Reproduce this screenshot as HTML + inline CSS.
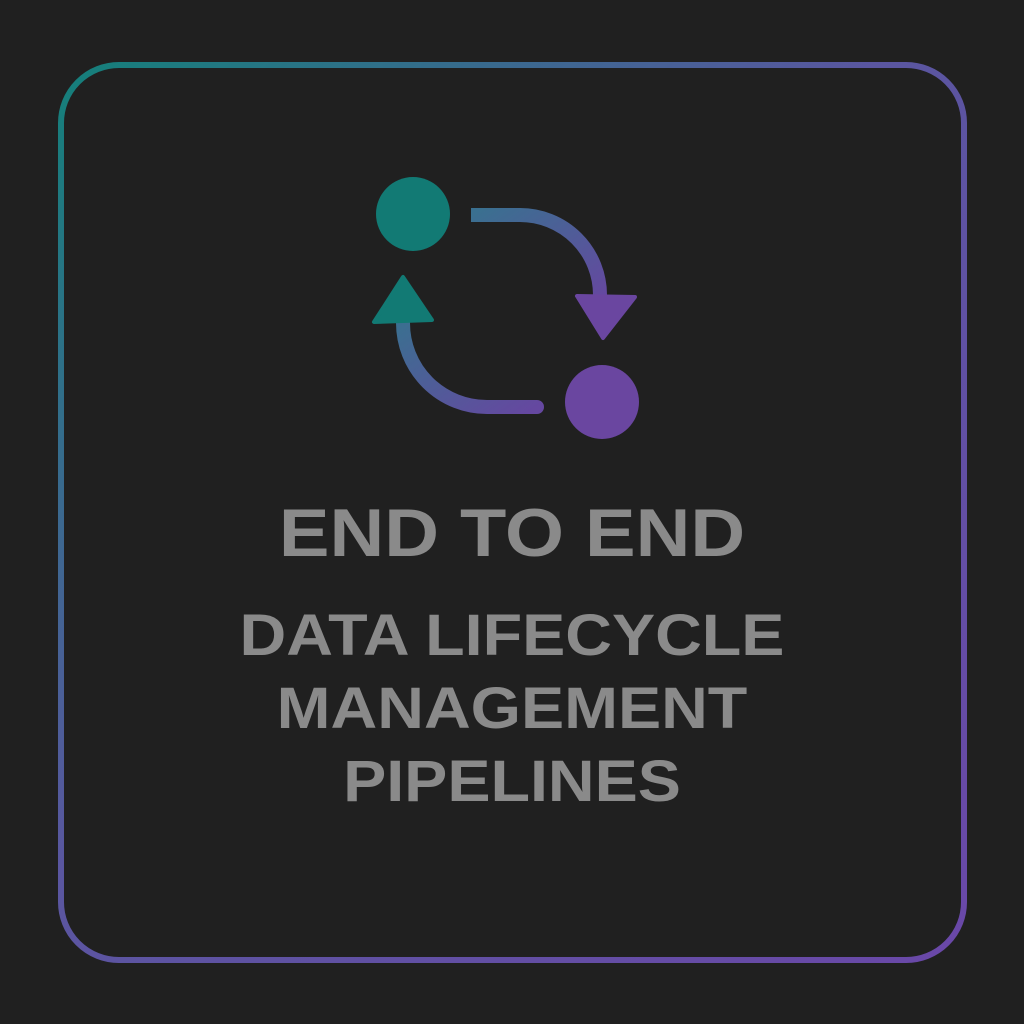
<!DOCTYPE html>
<html><head><style>
html,body{margin:0;padding:0;background:#202020;width:1024px;height:1024px;overflow:hidden}
.t{position:absolute;left:0;width:1024px;text-align:center;font-family:"Liberation Sans",sans-serif;font-weight:bold;color:#8a8a8a;transform:scaleX(1.115);transform-origin:512px 0}
</style></head><body>
<svg width="1024" height="1024" style="position:absolute;left:0;top:0">
<defs>
<linearGradient id="b" x1="0" y1="0" x2="1" y2="1">
<stop offset="0" stop-color="#14807a"/><stop offset="0.45" stop-color="#5a56a0"/><stop offset="1" stop-color="#6a48a8"/>
</linearGradient>
<linearGradient id="a1" x1="0" y1="0" x2="1" y2="1">
<stop offset="0" stop-color="#3a7090"/><stop offset="1" stop-color="#6548a0"/>
</linearGradient>
<linearGradient id="a2" x1="1" y1="1" x2="0" y2="0">
<stop offset="0" stop-color="#6548a0"/><stop offset="1" stop-color="#3a7090"/>
</linearGradient>
</defs>
<rect x="61" y="65" width="903" height="895" rx="58" fill="none" stroke="url(#b)" stroke-width="6"/>
<circle cx="413" cy="214" r="37" fill="#127a74"/>
<circle cx="602" cy="402" r="37" fill="#6a46a0"/>
<path d="M471 215 H520 A80 80 0 0 1 600 295 V300" fill="none" stroke="url(#a1)" stroke-width="14" stroke-linecap="butt"/>
<polygon points="577,296 635,297 603,338" fill="#6a46a0" stroke="#6a46a0" stroke-width="4" stroke-linejoin="round"/>
<path d="M537 407 H487 A84 84 0 0 1 403 323 V318" fill="none" stroke="url(#a2)" stroke-width="14" stroke-linecap="round"/>
<polygon points="374,322 432,320 403,277" fill="#127a74" stroke="#127a74" stroke-width="4" stroke-linejoin="round"/>
</svg>
<div class="t" style="top:495px;font-size:68px;line-height:76px">END TO END</div>
<div class="t" style="top:603px;font-size:58px;line-height:66px">DATA LIFECYCLE</div>
<div class="t" style="top:676px;font-size:58px;line-height:66px">MANAGEMENT</div>
<div class="t" style="top:749px;font-size:58px;line-height:66px">PIPELINES</div>
</body></html>
